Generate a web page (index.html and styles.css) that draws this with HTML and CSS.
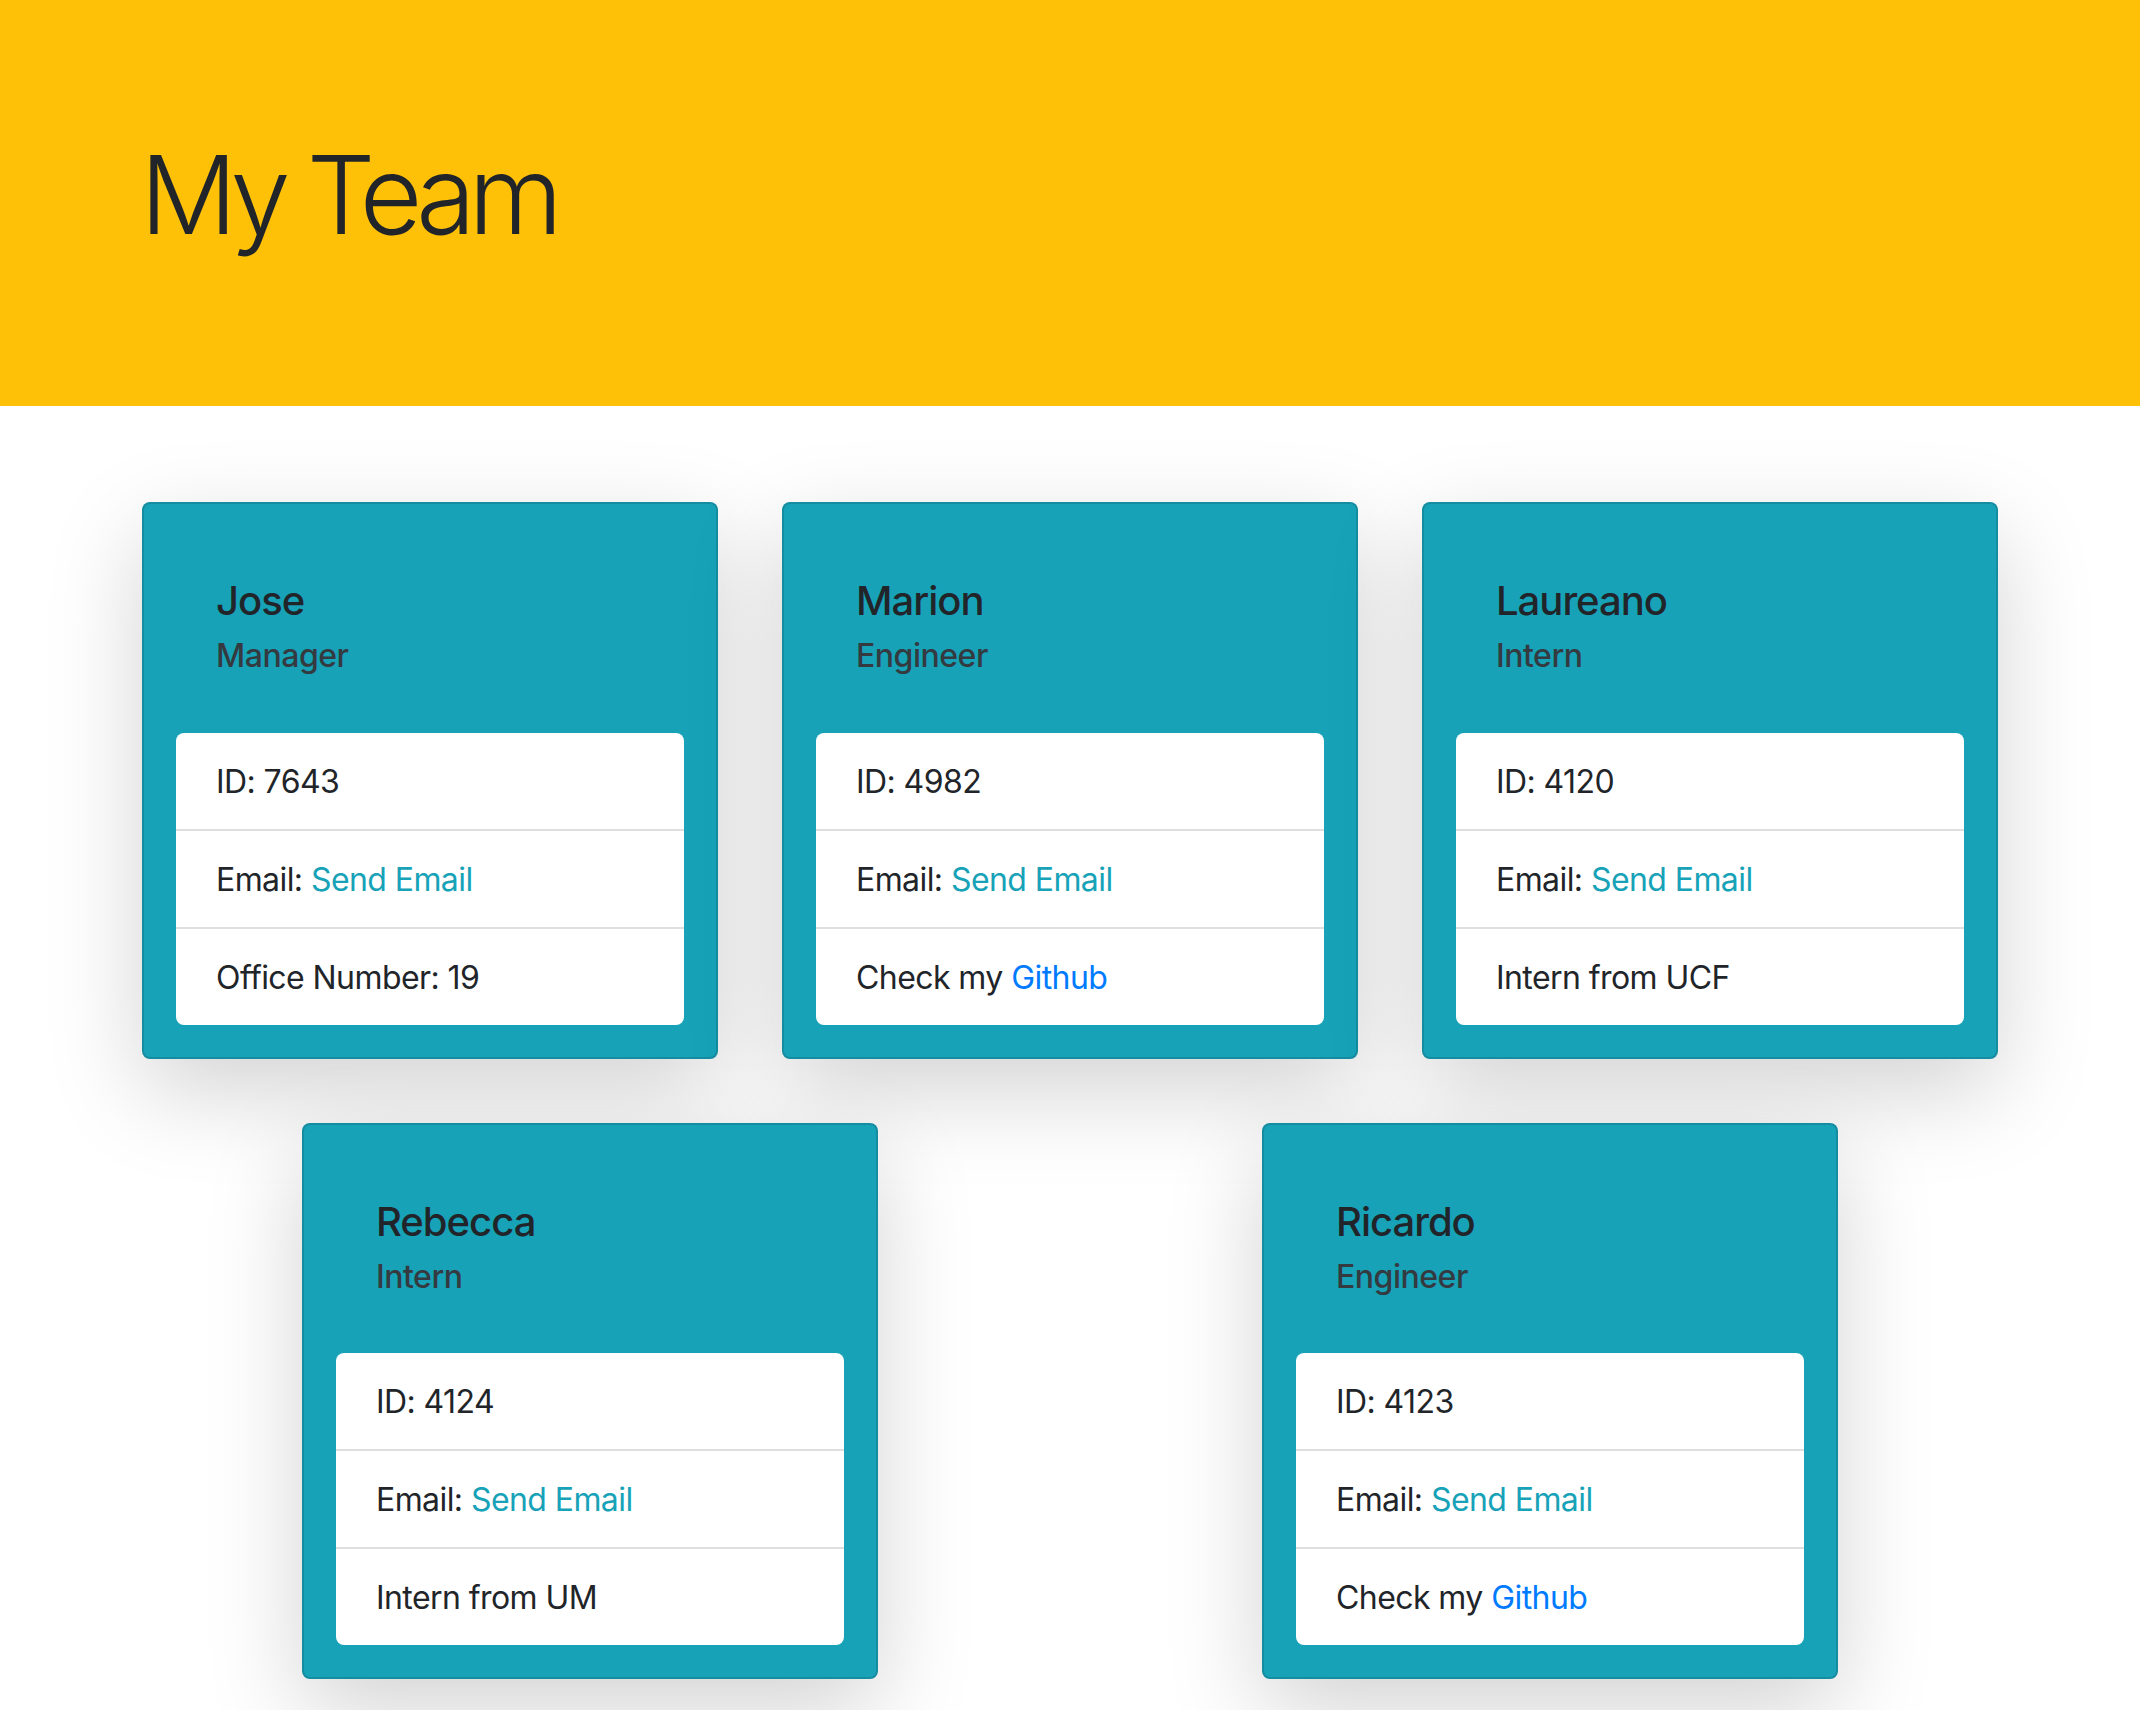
FILE: index.html
```html
<!DOCTYPE html>
<html lang="en">
<head>
<meta charset="utf-8">
<title>My Team</title>
<link rel="stylesheet" href="styles.css">
</head>
<body>
<header class="jumbotron">
  <div class="container">
    <h1 class="title">My Team</h1>
  </div>
</header>
<main class="container team">
  <div class="row">
    <article class="card">
      <div class="card-head">
        <h5 class="card-name">Jose</h5>
        <h6 class="card-role">Manager</h6>
      </div>
      <ul class="info-list">
        <li class="info-item">ID: 7643</li>
        <li class="info-item">Email: <a class="mail-link" href="#">Send Email</a></li>
        <li class="info-item">Office Number: 19</li>
      </ul>
    </article>
    <article class="card">
      <div class="card-head">
        <h5 class="card-name">Marion</h5>
        <h6 class="card-role">Engineer</h6>
      </div>
      <ul class="info-list">
        <li class="info-item">ID: 4982</li>
        <li class="info-item">Email: <a class="mail-link" href="#">Send Email</a></li>
        <li class="info-item">Check my <a class="gh-link" href="#">Github</a></li>
      </ul>
    </article>
    <article class="card">
      <div class="card-head">
        <h5 class="card-name">Laureano</h5>
        <h6 class="card-role">Intern</h6>
      </div>
      <ul class="info-list">
        <li class="info-item">ID: 4120</li>
        <li class="info-item">Email: <a class="mail-link" href="#">Send Email</a></li>
        <li class="info-item">Intern from UCF</li>
      </ul>
    </article>
    <article class="card">
      <div class="card-head">
        <h5 class="card-name">Rebecca</h5>
        <h6 class="card-role">Intern</h6>
      </div>
      <ul class="info-list">
        <li class="info-item">ID: 4124</li>
        <li class="info-item">Email: <a class="mail-link" href="#">Send Email</a></li>
        <li class="info-item">Intern from UM</li>
      </ul>
    </article>
    <article class="card">
      <div class="card-head">
        <h5 class="card-name">Ricardo</h5>
        <h6 class="card-role">Engineer</h6>
      </div>
      <ul class="info-list">
        <li class="info-item">ID: 4123</li>
        <li class="info-item">Email: <a class="mail-link" href="#">Send Email</a></li>
        <li class="info-item">Check my <a class="gh-link" href="#">Github</a></li>
      </ul>
    </article>
  </div>
</main>
</body>
</html>
```
FILE: styles.css
```css
* {
  box-sizing: border-box;
}

body {
  margin: 0;
  font-family: Inter, "Noto Sans", "Liberation Sans", sans-serif;
  font-size: 32px;
  line-height: 1.5;
  color: #212529;
  background: #ffffff;
}

.container {
  width: 1920px;
  margin: 0 auto;
  padding: 0 30px;
}

.jumbotron {
  background: #ffc107;
  padding: 128px 0;
  margin-bottom: 64px;
}

.title {
  margin: 0 0 16px;
  font-size: 108px;
  font-weight: 300;
  line-height: 134.4px;
  letter-spacing: -0.066em;
  color: #212529;
}

.team {
  padding: 0;
}

.row {
  display: flex;
  flex-wrap: wrap;
  justify-content: space-around;
}

.card {
  width: 576px;
  margin: 32px;
  background: #17a2b8;
  border: 2px solid rgba(0, 0, 0, 0.125);
  border-radius: 8px;
  box-shadow: 0 32px 96px rgba(0, 0, 0, 0.175);
}

.card-head {
  padding: 73px 72px 25px;
}

.card-name {
  margin: 0 0 24px;
  font-size: 40px;
  font-weight: 500;
  line-height: 48px;
  letter-spacing: -0.025em;
  color: #212529;
}

.card-role {
  margin: -12px 0 0;
  font-size: 32px;
  font-weight: 500;
  line-height: 38.4px;
  letter-spacing: -0.015em;
  color: #343a40;
}

.info-list {
  list-style: none;
  margin: 32px;
  padding: 0;
  background: #ffffff;
  border-radius: 8px;
  overflow: hidden;
}

.info-item {
  padding: 25px 40px 23px;
  line-height: 48px;
  letter-spacing: -0.018em;
}

.info-item + .info-item {
  border-top: 2px solid #dfdfdf;
}

.mail-link {
  color: #17a2b8;
  text-decoration: none;
}

.gh-link {
  color: #007bff;
  text-decoration: none;
}
```
